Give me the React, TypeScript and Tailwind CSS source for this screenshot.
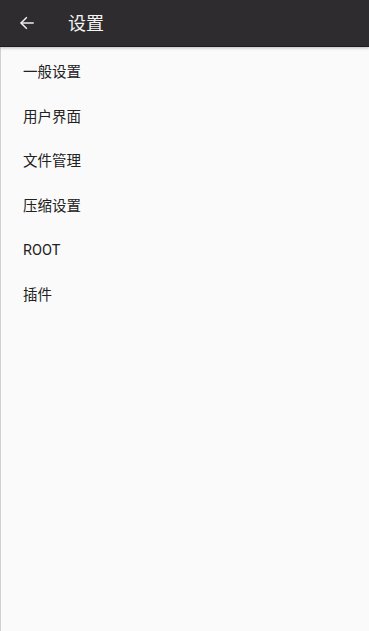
import React from 'react';

const items = ['一般设置', '用户界面', '文件管理', '压缩设置', 'ROOT', '插件'];

function App() {
  return (
    <div
      className="flex h-[631px] w-[369px] flex-col bg-[#fafafa]"
      style={{ fontFamily: 'Roboto, "Noto Sans CJK SC", sans-serif' }}
    >
      <div className="relative z-10 flex h-[47px] shrink-0 items-center border-b border-[#1e1c1e] bg-[#2e2c2e] shadow-[0_1px_3px_rgba(0,0,0,0.25)]">
        <div className="flex w-[52px] items-center justify-center pl-[1px]">
          <svg width="16" height="16" viewBox="0 0 24 24" fill="none" stroke="#f2f2f2" strokeWidth="2.2" strokeLinecap="square">
            <path d="M21 12H4" />
            <path d="M11 4l-8 8 8 8" />
          </svg>
        </div>
        <h1 className="ml-[16px] text-[18px] text-[#f5f5f5]">设置</h1>
      </div>

      <div className="flex flex-1 flex-col border-l border-[#d0d0d0] pt-[3.5px]">
        {items.map((item) => (
          <div key={item} className="flex h-[44.6px] items-center pl-[22px] text-[14.5px] text-[#212121]">
            {item}
          </div>
        ))}
      </div>
    </div>
  );
}

export default App;
